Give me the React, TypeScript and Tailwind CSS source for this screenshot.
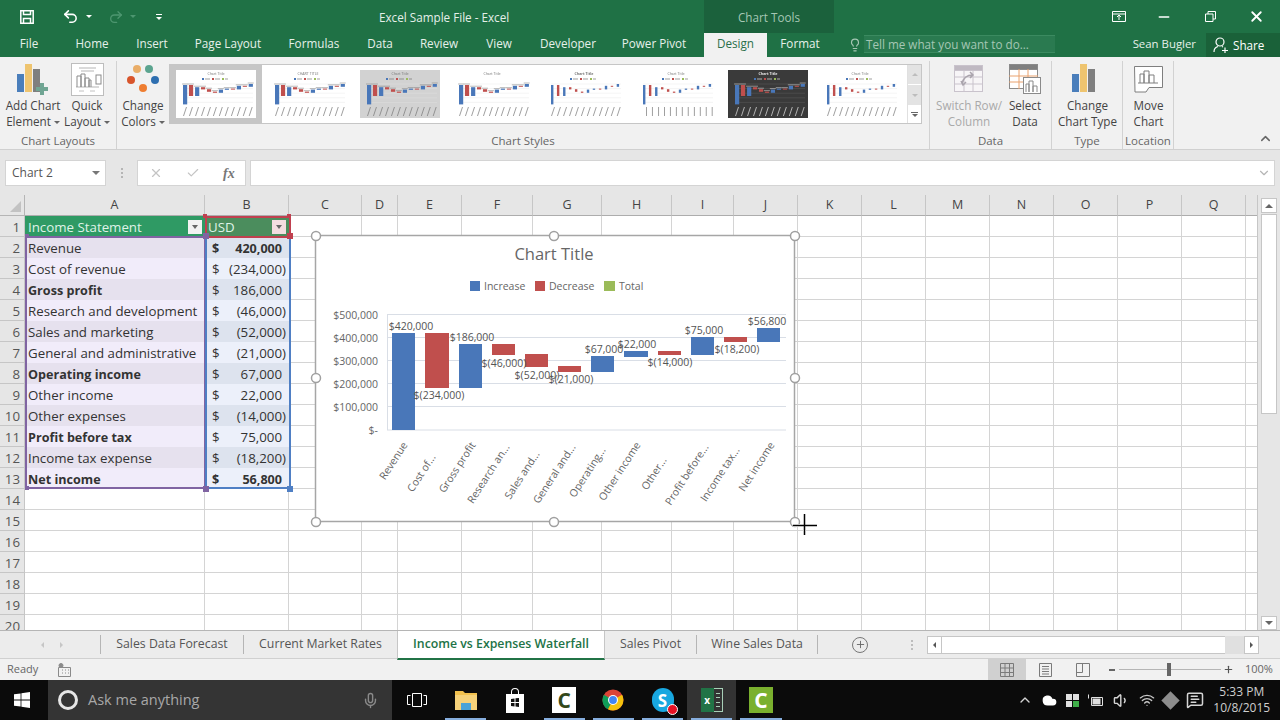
import React from "react";
import {
  Undo2,
  Redo2,
  Lightbulb,
  Minus,
  X,
  Check,
  ChevronUp,
  ChevronDown,
  Mic,
  Volume1,
  Wifi,
  MessageSquareText,
  Cloud,
  Plus,
} from "lucide-react";

const columns = ["A", "B", "C", "D", "E", "F", "G", "H", "I", "J", "K", "L", "M", "N", "O", "P", "Q", ""];

const tableRows = [
  { name: "Revenue", value: "420,000", bold: false, boldValue: true },
  { name: "Cost of revenue", value: "(234,000)" },
  { name: "Gross profit", value: "186,000", bold: true },
  { name: "Research and development", value: "(46,000)" },
  { name: "Sales and marketing", value: "(52,000)" },
  { name: "General and administrative", value: "(21,000)" },
  { name: "Operating income", value: "67,000", bold: true },
  { name: "Other income", value: "22,000" },
  { name: "Other expenses", value: "(14,000)" },
  { name: "Profit before tax", value: "75,000", bold: true },
  { name: "Income tax expense", value: "(18,200)" },
  { name: "Net income", value: "56,800", bold: true, boldValue: true },
];

const BLUE = "#4977b9";
const RED = "#c04f4d";

const bars = [
  { x: 392, w: 23, top: 333, bot: 430, c: BLUE },
  { x: 425, w: 24, top: 333, bot: 388, c: RED },
  { x: 459, w: 23, top: 344, bot: 388, c: BLUE },
  { x: 492, w: 23, top: 344, bot: 355, c: RED },
  { x: 525, w: 23, top: 354, bot: 367, c: RED },
  { x: 558, w: 23, top: 366, bot: 372, c: RED },
  { x: 591, w: 23, top: 356, bot: 372, c: BLUE },
  { x: 624, w: 24, top: 351, bot: 357, c: BLUE },
  { x: 658, w: 23, top: 351, bot: 355, c: RED },
  { x: 691, w: 23, top: 337, bot: 355, c: BLUE },
  { x: 724, w: 23, top: 337, bot: 342, c: RED },
  { x: 757, w: 23, top: 328, bot: 342, c: BLUE },
];

const dataLabels = [
  ["$420,000", 411, 326],
  ["$(234,000)", 439, 395],
  ["$186,000", 472, 337],
  ["$(46,000)", 504, 363],
  ["$(52,000)", 537, 375],
  ["$(21,000)", 571, 379],
  ["$67,000", 604, 349],
  ["$22,000", 637, 344],
  ["$(14,000)", 670, 362],
  ["$75,000", 704, 330],
  ["$(18,200)", 737, 349],
  ["$56,800", 767, 321],
] as const;

const categories = [
  ["Revenue", 408, 445],
  ["Cost of...", 436, 457],
  ["Gross profit", 476, 445],
  ["Research an...", 510, 447],
  ["Sales and...", 540, 454],
  ["General and...", 576, 447],
  ["Operating...", 606, 450],
  ["Other income", 641, 445],
  ["Other...", 667, 460],
  ["Profit before...", 709, 447],
  ["Income tax...", 740, 450],
  ["Net income", 775, 445],
] as const;

function MiniChart({ variant }: { variant: number }) {
  const dark = variant === 6;
  const gray = variant === 2;
  const thin = variant === 4 || variant === 5 || variant === 7;
  const ink = dark ? "#e4e4e4" : "#777777";
  return (
    <svg viewBox="0 0 80 48" className="w-[80px] h-[48px] blur-[0.4px]">
      <rect width="80" height="48" fill={dark ? "#3a3a3a" : gray ? "#d2d2d2" : "#ffffff"} />
      <text x="40" y="4.5" fontSize="3.6" textAnchor="middle" fill={ink} fontWeight={variant === 4 || dark ? 700 : 400}>
        {variant === 1 ? "CHART TITLE" : "Chart Title"}
      </text>
      {variant !== 3 && (
        <g>
          <rect x="26" y="8" width="2" height="2" fill={BLUE} />
          <rect x="36" y="8" width="2" height="2" fill={RED} />
          <rect x="46" y="8" width="2" height="2" fill="#9bbb59" />
          <line x1="29" y1="9" x2="34" y2="9" stroke={ink} strokeWidth="0.7" />
          <line x1="39" y1="9" x2="44" y2="9" stroke={ink} strokeWidth="0.7" />
          <line x1="49" y1="9" x2="52" y2="9" stroke={ink} strokeWidth="0.7" />
        </g>
      )}
      {[0, 1, 2, 3, 4].map((i) => (
        <line key={i} x1="7" x2="77" y1={14 + i * 4.6} y2={14 + i * 4.6} stroke={dark ? "#666666" : "#e2e2e2"} strokeWidth="0.4" />
      ))}
      {bars.map((b, i) => {
        const x = 7 + (b.x - 392) * 0.18;
        const top = 14 + (b.top - 328) * 0.2;
        const bot = 14 + (b.bot - 328) * 0.2;
        return (
          <g key={i}>
            <rect x={x} y={top} width={thin ? 2.4 : 4.2} height={Math.max(bot - top, 1)} fill={b.c} />
            {!thin && <rect x={x - 1} y={top - 1.5} width="6" height="1" fill={ink} opacity="0.5" />}
            <line
              x1={x + 3.5}
              y1="37"
              x2={variant === 5 ? x + 3.5 : x + 0.5}
              y2="46"
              stroke={ink}
              strokeWidth="1"
              opacity="0.7"
            />
          </g>
        );
      })}
    </svg>
  );
}

function RibbonButton({
  icon,
  lines,
  width,
  muted,
  caret,
}: {
  icon: React.ReactNode;
  lines: string[];
  width: string;
  muted?: boolean;
  caret?: boolean;
}) {
  return (
    <div className={`flex flex-col items-center shrink-0 ${width} ${muted ? "text-[#a9a9a9]" : "text-[#444444]"}`}>
      <div className="h-[36px] flex items-center justify-center">{icon}</div>
      {lines.map((l, i) => (
        <div key={l} className="h-[16px] leading-[16px] whitespace-nowrap text-[11.7px]">
          {l}
          {caret && i === 1 && <Caret />}
        </div>
      ))}
    </div>
  );
}

function RibbonGroup({ label, width, children }: { label: string; width: string; children: React.ReactNode }) {
  return (
    <div className={`flex flex-col shrink-0 h-[88px] border-r border-[#d2d2d2] ${width}`}>
      <div className="flex flex-1">{children}</div>
      <div className="h-[16px] leading-[16px] text-center text-[11.5px] text-[#666666]">{label}</div>
    </div>
  );
}

function Caret({ className = "" }: { className?: string }) {
  return <span className={`inline-block ml-[3px] align-middle border-x-[3px] border-t-[3px] border-x-transparent border-t-[#666666] ${className}`} />;
}

function ChartBarsIcon({ plus }: { plus?: boolean }) {
  return (
    <svg width="34" height="34" viewBox="0 0 34 34">
      <rect x="1" y="12" width="7" height="18" fill="#4a7ebb" />
      <rect x="9" y="2" width="7" height="28" fill="#eec46f" />
      <rect x="17" y="7" width="7" height="23" fill="#7f7f7f" />
      {plus && <path d="M24 21h4v4h4v4h-4v4h-4v-4h-4v-4h4z" fill="#70a593" />}
    </svg>
  );
}

function QuickLayoutIcon() {
  return (
    <svg width="33" height="33" viewBox="0 0 33 33" fill="none" stroke="#8b8b8b">
      <rect x="0.5" y="0.5" width="32" height="32" fill="#ffffff" stroke="#bdbdbd" />
      <path d="M8 5h17M10 8h13M5 24h23" stroke="#b5b5b5" strokeWidth="1.2" />
      <path d="M6 24V13h4v11M10 24V11h4v13M14 24V15h4v9M18 24V17h2v7" />
      <rect x="25" y="12" width="5" height="9" />
      <path d="M8 28h5M19 28h5" stroke="#c2c2c2" />
    </svg>
  );
}

function ColorsIcon() {
  return (
    <svg width="34" height="32" viewBox="0 0 34 32">
      <circle cx="11" cy="6" r="4" fill="#e9ad68" />
      <circle cx="23" cy="6" r="4" fill="#5ba48f" />
      <circle cx="5" cy="17" r="4" fill="#d8552c" />
      <circle cx="29" cy="17" r="4" fill="#2e6fb0" />
      <circle cx="17" cy="25" r="4" fill="#ee7d31" />
    </svg>
  );
}

function SwitchRowIcon() {
  return (
    <svg width="30" height="28" viewBox="0 0 30 28" fill="none" stroke="#c9c3cc">
      <rect x="0.5" y="0.5" width="28" height="26" fill="#f7f5f7" />
      <rect x="0.5" y="0.5" width="28" height="5" fill="#bfb9c2" />
      <path d="M10 5v22M19 5v22M0 12h29M0 19h29" />
      <path d="M8 19c1-6 5-9 11-9M16 7l3 3-3 3M7 16l2 4 3-3" stroke="#aaa4ad" strokeWidth="1.5" />
    </svg>
  );
}

function SelectDataIcon() {
  return (
    <svg width="32" height="30" viewBox="0 0 32 30" fill="none" stroke="#8a8a8a">
      <rect x="0.5" y="0.5" width="28" height="24" fill="#ffffff" />
      <rect x="0.5" y="0.5" width="28" height="5" fill="#7f7f7f" />
      <path d="M10 5v20M19 5v20M0 12h29M0 18h29" stroke="#e9a26f" />
      <rect x="14.5" y="13.5" width="17" height="16" fill="#ffffff" />
      <path d="M17 28V20h3v8M20 28V17h4v11M24 28v-6h4v6" />
    </svg>
  );
}

function MoveChartIcon() {
  return (
    <svg width="29" height="27" viewBox="0 0 29 27" fill="none" stroke="#7f7f7f">
      <path d="M0.5 0.5h28v21H15l-3 4.5H1z" fill="#ffffff" />
      <path d="M6 17V8h4v9M10 17V5h5v12M15 17V9h5v8M4 17h20" />
    </svg>
  );
}

function WindowsLogo() {
  return (
    <svg width="16" height="16" viewBox="0 0 16 16" fill="#ffffff">
      <path d="M0 2.3 6.6 1.4V7.5H0zM7.4 1.3 16 0v7.5H7.4zM0 8.4h6.6v6.2L0 13.7zM7.4 8.4H16V16l-8.6-1.2z" />
    </svg>
  );
}

function ChromeLogo() {
  return (
    <svg width="22" height="22" viewBox="0 0 22 22">
      <circle cx="11" cy="11" r="10.5" fill="#db4437" />
      <path d="M11 11 1.9 5.8A10.5 10.5 0 0 0 6 20.3z" fill="#0f9d58" />
      <path d="M11 11l-5 9.3A10.5 10.5 0 0 0 21.4 11 10 10 0 0 0 20 5.8z" fill="#f4c20d" />
      <circle cx="11" cy="11" r="5" fill="#ffffff" />
      <circle cx="11" cy="11" r="3.9" fill="#4285f4" />
    </svg>
  );
}

function TaskApp({ children, lit, active }: { children: React.ReactNode; lit?: boolean; active?: boolean }) {
  return (
    <div className={`relative w-[49.2px] h-full flex items-center justify-center shrink-0 ${active ? "bg-[#333333]" : ""}`}>
      {children}
      {lit && <div className="absolute bottom-0 left-[4px] right-[4px] h-[2px] bg-[#86aede]" />}
    </div>
  );
}

function CamtasiaIcon({ dark }: { dark?: boolean }) {
  return (
    <div className={`w-[24px] h-[26px] flex items-center justify-center font-bold text-[21px] leading-none ${dark ? "bg-[#7ab02e] text-white" : "bg-white text-[#33481a]"}`}>
      C
    </div>
  );
}

export default function App() {
  return (
    <div className="w-[1280px] h-[720px] overflow-hidden flex flex-col bg-[#e6e6e6] font-['Open_Sans',sans-serif] text-[11.7px] text-[#444444]">
      {/* title bar */}
      <div className="h-[33px] flex bg-[#1f7145] text-white shrink-0">
        <div className="w-[379px] flex items-center">
          <svg className="ml-[20px]" width="14" height="14" viewBox="0 0 14 14" fill="none" stroke="#ffffff" strokeWidth="1.5">
            <path d="M.8.8h12.4v12.4H.8zM3.500 1v3.500h7V1M3.500 13V8.500h7V13" />
          </svg>
          <Undo2 className="ml-[28px]" size={17} strokeWidth={2.2} />
          <Caret className="!border-t-white ml-[7px]" />
          <Redo2 className="ml-[16px] text-[#4d9670]" size={16} />
          <Caret className="!border-t-[#4d9670] ml-[6px]" />
          <div className="ml-[20px] flex flex-col items-center gap-[2px]">
            <span className="w-[6px] h-px bg-white" />
            <Caret className="!ml-0 !border-t-white" />
          </div>
        </div>
        <div className="w-[325px] pt-[9px] leading-[16px] text-[#e4efe9]">Excel Sample File - Excel</div>
        <div className="w-[130px] bg-[#1b613c] text-center pt-[9px] leading-[16px] text-[#a5c7b4]">Chart Tools</div>
        <div className="flex-1 flex items-center pl-[278px]">
          <svg width="14" height="11" viewBox="0 0 14 11" fill="none" stroke="#ffffff">
            <path d="M.5.5h13v10H.5zM.5 3h13M7 9V4.500M5 6l2-2 2 2" />
          </svg>
          <Minus className="ml-[30px]" size={16} strokeWidth={2.4} />
          <svg className="ml-[33px]" width="11" height="11" viewBox="0 0 11 11" fill="none" stroke="#ffffff">
            <path d="M.5 3h7.500v7.500H.5zM3 3V.5h7.500V8H8" />
          </svg>
          <X className="ml-[32px]" size={17} strokeWidth={2.6} />
        </div>
      </div>

      {/* tabs */}
      <div className="h-[24px] flex bg-[#1f7145] text-[#e6f0ea] shrink-0 leading-[21px]">
        {[
          ["File", "w-[58px]"],
          ["Home", "w-[68px]"],
          ["Insert", "w-[52px]"],
          ["Page Layout", "w-[100px]"],
          ["Formulas", "w-[72px]"],
          ["Data", "w-[60px]"],
          ["Review", "w-[58px]"],
          ["View", "w-[62px]"],
          ["Developer", "w-[76px]"],
          ["Power Pivot", "w-[96px]"],
        ].map(([t, w]) => (
          <div key={t} className={`text-center ${w}`}>
            {t}
          </div>
        ))}
        <div className="w-[2px]" />
        <div className="w-[63px] text-center bg-[#f1f1f1] text-[#2a6f4a]">Design</div>
        <div className="w-[66px] text-center">Format</div>
        <div className="w-[31px] flex items-center justify-end pr-[2px] text-[#a5c7b4]">
          <Lightbulb size={14} />
        </div>
        <div className="w-[191px] h-[18px] mt-[2px] bg-[#2a7a50] border-y border-[#3b8a60] text-[#a5c7b4] pl-[2px] leading-[16px]">Tell me what you want to do...</div>
        <div className="w-[141px] text-right text-[11.4px]">Sean Bugler</div>
        <div className="w-[10px]" />
        <div className="flex-1 bg-[#1a6139] flex items-center pl-[7px] gap-[4px] text-white">
          <svg width="16" height="16" viewBox="0 0 16 16" fill="none" stroke="#ffffff" strokeWidth="1.2">
            <circle cx="7" cy="5" r="4" />
            <path d="M1 15c0-3 2-5 4-5.500M9 9.500l1 .5M9 13.500h6M12 10.500v6" />
          </svg>
          Share
        </div>
      </div>

      {/* ribbon */}
      <div className="h-[93px] flex bg-[#f1f1f1] border-b border-[#d0d0d0] pt-[4px] shrink-0 relative">
        <RibbonGroup label="Chart Layouts" width="w-[117px]">
          <RibbonButton width="w-[60px] ml-[3px]" caret icon={<ChartBarsIcon plus />} lines={["Add Chart", "Element"]} />
          <RibbonButton width="w-[48px]" caret icon={<QuickLayoutIcon />} lines={["Quick", "Layout"]} />
        </RibbonGroup>
        <RibbonGroup label="Chart Styles" width="w-[813px]">
          <RibbonButton width="w-[52px]" caret icon={<ColorsIcon />} lines={["Change", "Colors"]} />
          <div className="flex h-[60px] mt-[3px] w-[753px] border border-[#c6c6c6] bg-white">
            <div className="flex flex-1">
              {[0, 1, 2, 3, 4, 5, 6, 7].map((v) => (
                <div key={v} className={`w-[92px] shrink-0 flex items-center justify-center ${v === 0 ? "bg-[#c6c6c6]" : ""}`}>
                  <MiniChart variant={v} />
                </div>
              ))}
            </div>
            <div className="w-[14px] flex flex-col border-l border-[#e0e0e0]">
              <div className="h-[20px] bg-[#e3e3e3] border-b border-white flex items-center justify-center">
                <span className="border-x-[3px] border-b-[3px] border-x-transparent border-b-[#bdbdbd]" />
              </div>
              <div className="h-[20px] bg-[#e3e3e3] flex items-center justify-center">
                <span className="border-x-[3px] border-t-[3px] border-x-transparent border-t-[#bdbdbd]" />
              </div>
              <div className="flex-1 flex flex-col items-center justify-center gap-[1px]">
                <span className="w-[7px] h-px bg-[#666666]" />
                <span className="border-x-[3px] border-t-[3px] border-x-transparent border-t-[#666666]" />
              </div>
            </div>
          </div>
        </RibbonGroup>
        <RibbonGroup label="Data" width="w-[122px]">
          <RibbonButton width="w-[78px]" muted icon={<SwitchRowIcon />} lines={["Switch Row/", "Column"]} />
          <RibbonButton width="w-[34px]" icon={<SelectDataIcon />} lines={["Select", "Data"]} />
        </RibbonGroup>
        <RibbonGroup label="Type" width="w-[71px]">
          <RibbonButton width="w-[71px]" icon={<ChartBarsIcon />} lines={["Change", "Chart Type"]} />
        </RibbonGroup>
        <RibbonGroup label="Location" width="w-[51px]">
          <RibbonButton width="w-[51px]" icon={<MoveChartIcon />} lines={["Move", "Chart"]} />
        </RibbonGroup>
        <div className="flex-1 flex items-end justify-end pr-[7px] pb-[1px]">
          <ChevronUp size={15} strokeWidth={2.4} className="text-[#666666] mb-[2px]" />
        </div>
      </div>

      {/* formula bar */}
      <div className="h-[45px] flex items-start pt-[10px] pl-[5px] bg-[#e6e6e6] shrink-0">
        <div className="w-[101px] h-[26px] bg-white border border-[#d4d4d4] flex items-center justify-between pl-[6px] pr-[5px] text-[#555555] text-[12px]">
          Chart 2
          <span className="border-x-[4px] border-t-[4px] border-x-transparent border-t-[#777777]" />
        </div>
        <div className="w-[31px] h-[26px] flex flex-col items-center justify-center gap-[2px]">
          <span className="w-[2px] h-[2px] bg-[#b5b5b5]" />
          <span className="w-[2px] h-[2px] bg-[#b5b5b5]" />
          <span className="w-[2px] h-[2px] bg-[#b5b5b5]" />
        </div>
        <div className="w-[109px] h-[26px] bg-white border border-[#d4d4d4] flex items-center pl-[11px] text-[#c4c4c4]">
          <X size={14} />
          <Check size={14} className="ml-[23px]" />
          <span className="ml-[23px] font-['Liberation_Serif',serif] italic font-bold text-[14px] text-[#777777]">fx</span>
        </div>
        <div className="w-[4px]" />
        <div className="w-[1025px] h-[26px] bg-white border border-[#d4d4d4] flex items-center justify-end pr-[3px] text-[#b5b5b5]">
          <ChevronDown size={14} />
        </div>
      </div>

      {/* sheet */}
      <div className="h-[435px] flex shrink-0">
        <div className="relative w-[1258px] h-full overflow-hidden bg-white border-r border-[#c6c6c6]">
          <div className="grid grid-cols-[25px_180px_84px_73px_36px_64px_71px_69px_70px_62px_64px_64px_64px_64px_64px_64px_64px_64px_12px] auto-rows-[21px]">
            <div className="bg-[#e6e6e6] h-[21px] border-b border-r border-[#b5b5b5] flex items-end justify-end p-[3px]">
              <span className="border-l-[11px] border-b-[11px] border-l-transparent border-b-[#c2c2c2]" />
            </div>
            {columns.map((c, i) => (
              <div key={i} className="h-[21px] bg-[#e6e6e6] border-b border-r border-b-[#adadad] border-r-[#c6c6c6] text-center text-[12.5px] leading-[20px] text-[#444444]">
                {c}
              </div>
            ))}
            {Array.from({ length: 20 }).map((_, r) => {
              const row = tableRows[r - 1];
              const even = r % 2 === 1;
              return (
                <React.Fragment key={r}>
                  <div className="bg-[#e6e6e6] border-b border-r border-[#c6c6c6] text-right pr-[4px] text-[13.3px] leading-[22px] text-[#555555]">{r + 1}</div>
                  {columns.map((_c, c) => {
                    if (c === 0 && r === 0)
                      return (
                        <div key={c} className="bg-[#2f9a64] text-[#dff3e7] text-[13.3px] leading-[22px] pl-[3px] flex justify-between">
                          Income Statement
                          <span className="w-[14px] h-[14px] mt-[4px] mr-[3px] bg-[#f2f2f2] flex items-center justify-center">
                            <span className="border-x-[3.5px] border-t-[4px] border-x-transparent border-t-[#666666]" />
                          </span>
                        </div>
                      );
                    if (c === 1 && r === 0)
                      return (
                        <div key={c} className="bg-[#4b8d5d] text-[#dff3e7] text-[13.3px] leading-[22px] pl-[3px] flex justify-between">
                          USD
                          <span className="w-[14px] h-[14px] mt-[4px] mr-[3px] bg-[#f3dde0] flex items-center justify-center">
                            <span className="border-x-[3.5px] border-t-[4px] border-x-transparent border-t-[#666666]" />
                          </span>
                        </div>
                      );
                    if (c === 0 && row)
                      return (
                        <div key={c} className={`leading-[23px] pl-[3px] whitespace-nowrap text-[#333333] ${even ? "bg-[#e6e1ee]" : "bg-[#f1ecfa]"} ${row.bold ? "font-bold text-[12.6px]" : "text-[13.3px]"}`}>
                          {row.name}
                        </div>
                      );
                    if (c === 1 && row)
                      return (
                        <div key={c} className={`leading-[23px] pl-[7px] pr-[3px] flex justify-between whitespace-nowrap text-[#333333] ${even ? "bg-[#dde3ee]" : "bg-[#ecf0fa]"} ${row.boldValue ? "font-bold text-[12.6px]" : "text-[13.3px]"}`}>
                          <span>$</span>
                          <span className={row.value.startsWith("(") ? "" : "pr-[4px]"}>{row.value}</span>
                        </div>
                      );
                    return <div key={c} className="border-b border-r border-[#d4d4d4]" />;
                  })}
                </React.Fragment>
              );
            })}
          </div>

          {/* selection outlines over the table */}
          <div className="absolute left-[25px] top-[41px] w-[181px] h-[253px] border-2 border-[#8064a2]" />
          <div className="absolute left-[205px] top-[41px] w-[86px] h-[253px] border-2 border-[#4f7fc4]" />
          <div className="absolute left-[205px] top-[21px] w-[86px] h-[22px] border-2 border-[#c0404f]" />
          <div className="absolute left-[203px] top-[38px] w-[6px] h-[6px] bg-[#8064a2]" />
          <div className="absolute left-[25px] top-[39px] w-[4px] h-[4px] bg-[#8064a2]" />
          <div className="absolute left-[25px] top-[291px] w-[4px] h-[4px] bg-[#8064a2]" />
          <div className="absolute left-[203px] top-[291px] w-[6px] h-[6px] bg-[#8064a2]" />
          <div className="absolute left-[287px] top-[38px] w-[6px] h-[6px] bg-[#c0404f]" />
          <div className="absolute left-[287px] top-[291px] w-[6px] h-[6px] bg-[#4f7fc4]" />
          <div className="absolute left-[203px] top-[19px] w-[4px] h-[4px] bg-[#c0404f]" />
          <div className="absolute left-[287px] top-[19px] w-[4px] h-[4px] bg-[#c0404f]" />

          {/* chart object */}
          <svg className="absolute left-[305px] top-[30px]" width="520" height="310" viewBox="305 225 520 310">
            <rect x="315.500" y="235.500" width="479" height="286" fill="#ffffff" stroke="#a6a6a6" strokeWidth="1.5" />
            <text x="554" y="253" fontSize="16.5" textAnchor="middle" dominantBaseline="central" fill="#666666">
              Chart Title
            </text>
            <rect x="470" y="281" width="10" height="10" fill={BLUE} />
            <text x="484" y="286" fontSize="10.500" dominantBaseline="central" fill="#666666">Increase</text>
            <rect x="535" y="281" width="10" height="10" fill={RED} />
            <text x="549" y="286" fontSize="10.500" dominantBaseline="central" fill="#666666">Decrease</text>
            <rect x="604" y="281" width="11" height="10" fill="#9bbb59" />
            <text x="619" y="286" fontSize="10.500" dominantBaseline="central" fill="#666666">Total</text>
            {[
              ["$500,000", 314.5],
              ["$400,000", 337.5],
              ["$300,000", 360.5],
              ["$200,000", 383.5],
              ["$100,000", 406.5],
              ["$-", 430],
            ].map(([t, y]) => (
              <g key={t}>
                <line x1="387" x2="786" y1={y} y2={y} stroke="#d9dee6" />
                <text x="378" y={y} fontSize="10.500" textAnchor="end" dominantBaseline="central" fill="#666666">
                  {t}
                </text>
              </g>
            ))}
            <line x1="387.500" x2="387.500" y1="314" y2="430" stroke="#d9dee6" />
            {bars.map((b) => (
              <rect key={b.x} x={b.x} y={b.top} width={b.w} height={b.bot - b.top} fill={b.c} />
            ))}
            {dataLabels.map(([t, x, y]) => (
              <text key={t} x={x} y={y} fontSize="10.500" textAnchor="middle" dominantBaseline="central" fill="#555555">
                {t}
              </text>
            ))}
            {categories.map(([t, x, y]) => (
              <text key={t} x={x} y={y} fontSize="10.500" textAnchor="end" fill="#666666" transform={`rotate(-57 ${x} ${y})`}>
                {t}
              </text>
            ))}
            {[
              [316, 236],
              [554, 236],
              [795, 236],
              [316, 378],
              [795, 378],
              [316, 522],
              [554, 522],
              [795, 522],
            ].map(([x, y]) => (
              <circle key={`${x}-${y}`} cx={x} cy={y} r="4.500" fill="#ffffff" stroke="#a0a0a0" strokeWidth="1.5" />
            ))}
            <path d="M804.500 514v23M793 525.500h24" stroke="#ffffff" strokeWidth="3" />
            <path d="M804.500 514v23M793 525.500h24" stroke="#000000" strokeWidth="1.5" />
          </svg>
        </div>

        {/* vertical scrollbar */}
        <div className="flex-1 flex flex-col pl-[3px] pr-[3px] pt-[3px] pb-[0px] bg-[#e6e6e6]">
          <div className="h-[15px] bg-white border border-[#c6c6c6] flex items-center justify-center">
            <span className="border-x-[4px] border-b-[4px] border-x-transparent border-b-[#666666]" />
          </div>
          <div className="h-[200px] mt-[1px] bg-white border border-[#c6c6c6]" />
          <div className="flex-1" />
          <div className="h-[14px] bg-white border border-[#c6c6c6] flex items-center justify-center">
            <span className="border-x-[4px] border-t-[4px] border-x-transparent border-t-[#666666]" />
          </div>
        </div>
      </div>

      {/* sheet tabs */}
      <div className="h-[28px] flex bg-[#ececec] border-t border-[#b5b5b5] shrink-0 text-[12.3px] text-[#555555]">
        <div className="w-[100px] flex items-center justify-center gap-[16px] text-[#c6c6c6] text-[9px] pl-[6px] pr-[2px]">
          <span className="border-y-[3px] border-r-[3px] border-y-transparent border-r-[#c6c6c6]" />
          <span className="border-y-[3px] border-l-[3px] border-y-transparent border-l-[#c6c6c6]" />
        </div>
        <div className="w-[143px] border-l border-[#b5b5b5] my-[4px] text-center leading-[18px]">Sales Data Forecast</div>
        <div className="w-[154px] border-l border-[#b5b5b5] my-[4px] text-center leading-[18px]">Current Market Rates</div>
        <div className="w-[208px] h-[29px] bg-white border-b-2 border-x border-x-[#c6c6c6] border-b-[#217346] text-center font-semibold text-[#217346] leading-[26px] z-10">Income vs Expenses Waterfall</div>
        <div className="w-[91px] my-[4px] text-center leading-[18px]">Sales Pivot</div>
        <div className="w-[122px] border-x border-[#b5b5b5] my-[4px] text-center leading-[18px]">Wine Sales Data</div>
        <div className="w-[84px] flex items-center justify-center">
          <span className="w-[16px] h-[16px] rounded-full border border-[#777777] flex items-center justify-center">
            <Plus size={11} strokeWidth={2} className="text-[#666666]" />
          </span>
        </div>
        <div className="w-[25px] pr-[6px] flex flex-col items-center justify-center gap-[2px]">
          <span className="w-[2px] h-[2px] bg-[#bdbdbd]" />
          <span className="w-[2px] h-[2px] bg-[#bdbdbd]" />
          <span className="w-[2px] h-[2px] bg-[#bdbdbd]" />
        </div>
        <div className="w-[332px] h-[18px] mt-[5px] flex bg-[#e0e0e0]">
          <div className="w-[15px] bg-white border border-[#c6c6c6] flex items-center justify-center">
            <span className="border-y-[3px] border-r-[3px] border-y-transparent border-r-[#555555]" />
          </div>
          <div className="w-[283px] bg-white border-y border-[#c6c6c6]" />
          <div className="flex-1" />
          <div className="w-[15px] bg-white border border-[#c6c6c6] flex items-center justify-center">
            <span className="border-y-[3px] border-l-[3px] border-y-transparent border-l-[#555555]" />
          </div>
        </div>
      </div>

      {/* status bar */}
      <div className="h-[22px] flex items-center bg-[#f1f1f1] border-t border-[#d0d0d0] shrink-0 text-[11px] text-[#666666]">
        <div className="w-[58px] pl-[7px]">Ready</div>
        <svg width="13" height="14" viewBox="0 0 13 14" fill="none" stroke="#8a8a8a">
          <circle cx="3" cy="2.500" r="2" fill="#8a8a8a" />
          <path d="M.5 4.500h12v9H.5zM4 7h1M7 7h1M10 7h1M4 10h1M7 10h1M10 10h1" />
        </svg>
        <div className="w-[917px]" />
        <div className="w-[38px] h-full bg-[#d0d0d0] flex items-center justify-center">
          <svg width="14" height="14" viewBox="0 0 14 14" fill="none" stroke="#7a7a7a">
            <path d="M.5.5h13v13H.5zM5 .5v13M9.500.5v13M.5 5h13M.5 9.500h13" />
          </svg>
        </div>
        <div className="w-[38px] flex justify-center">
          <svg width="13" height="14" viewBox="0 0 13 14" fill="none" stroke="#7a7a7a">
            <path d="M.5.5h12v13H.5zM3 3.500h7M3 6h7M3 8.500h7M3 11h7" />
          </svg>
        </div>
        <div className="w-[38px] flex justify-center">
          <svg width="14" height="14" viewBox="0 0 14 14" fill="none" stroke="#7a7a7a">
            <path d="M.5.5h13v13H.5zM.5 9.500h6v-9" />
          </svg>
        </div>
        <span className="ml-[7px] w-[6px] h-[2px] bg-[#666666]" />
        <div className="relative w-[102px] h-px ml-[4px] bg-[#b5b5b5]">
          <span className="absolute left-[48px] top-[-6px] w-[4px] h-[13px] bg-[#666666]" />
        </div>
        <Plus size={11} strokeWidth={2.6} className="ml-[2px] text-[#555555]" />
        <span className="ml-[11px]">100%</span>
      </div>

      {/* taskbar */}
      <div className="h-[40px] flex bg-[#0b0b0b] shrink-0 text-white">
        <div className="w-[48px] flex items-center justify-center pr-[4px]">
          <WindowsLogo />
        </div>
        <div className="w-[344px] bg-[#343434] flex items-center pl-[10px]">
          <span className="w-[20px] h-[20px] rounded-full border-[3px] border-[#e6e6e6] shrink-0" />
          <span className="ml-[10px] text-[14.5px] text-[#a8a8a8] w-[274px] shrink-0">Ask me anything</span>
          <Mic size={17} className="text-[#8a8a8a] shrink-0" />
        </div>
        <TaskApp>
          <svg width="20" height="16" viewBox="0 0 20 16" fill="none" stroke="#ffffff">
            <path d="M5.500 1.500h9v13h-9zM3.500 3.500h-3v9h3M16.500 3.500h3v9h-3" />
          </svg>
        </TaskApp>
        <TaskApp lit>
          <svg width="22" height="22" viewBox="0 0 22 22">
            <path d="M0 2h8l2 2h12v17H0z" fill="#f2c14e" />
            <rect x="0" y="6" width="22" height="15" fill="#f6d27a" />
            <rect x="6" y="14" width="10" height="7" fill="#4aa3d8" />
          </svg>
        </TaskApp>
        <TaskApp>
          <svg width="20" height="25" viewBox="0 0 20 25" fill="#ffffff">
            <path d="M6 6V4a4 4 0 0 1 8 0v2h-1V4a3 3 0 0 0-6 0v2z" />
            <path d="M1 6h18v19H1z" />
            <path d="M6 11l3.500-.5v3.500H6zM10.500 10.300 14 10v4h-3.500zM6 15h3.500v3.500L6 18zM10.500 15H14v4l-3.500-.5z" fill="#111111" />
          </svg>
        </TaskApp>
        <TaskApp lit>
          <CamtasiaIcon />
        </TaskApp>
        <TaskApp lit>
          <ChromeLogo />
        </TaskApp>
        <TaskApp lit>
          <div className="relative w-[22px] h-[24px] rounded-full bg-[#18a7e0] flex items-center justify-center font-bold text-[17px] leading-none text-white">
            S
            <span className="absolute -right-[4px] -bottom-[3px] w-[11px] h-[11px] rounded-full bg-[#e81123] border border-white" />
          </div>
        </TaskApp>
        <TaskApp lit active>
          <div className="w-[22px] h-[24px] flex items-stretch">
            <div className="w-[13px] bg-[#217346] flex items-center justify-center text-[10px] font-bold">x</div>
            <div className="flex-1 border border-[#a8d0b8] border-l-0 flex flex-col justify-evenly px-[2px]">
              <span className="h-px bg-[#a8d0b8]" />
              <span className="h-px bg-[#a8d0b8]" />
              <span className="h-px bg-[#a8d0b8]" />
              <span className="h-px bg-[#a8d0b8]" />
            </div>
          </div>
        </TaskApp>
        <TaskApp lit>
          <CamtasiaIcon dark />
        </TaskApp>
        <div className="w-[418px] flex items-center justify-end gap-[9px]">
          <ChevronUp size={16} className="text-[#d5d5d5]" />
          <Cloud size={15} fill="#ffffff" className="text-white" />
          <div className="grid grid-cols-2 gap-px">
            <span className="w-[6px] h-[6px] bg-[#e0e0e0]" />
            <span className="w-[6px] h-[6px] bg-[#e0e0e0]" />
            <span className="w-[6px] h-[6px] bg-[#e0e0e0]" />
            <span className="w-[6px] h-[6px] bg-[#3fae49]" />
          </div>
          <svg width="16" height="12" viewBox="0 0 16 12" fill="none" stroke="#e0e0e0">
            <path d="M.5.5v4M3.500 3.500h11v8h-11z" />
            <rect x="5" y="5" width="7" height="5" fill="#e0e0e0" />
          </svg>
          <Volume1 size={17} className="text-[#d5d5d5]" />
          <Wifi size={16} className="text-[#c8c8c8]" />
          <span className="w-[13px] h-[13px] rotate-45 bg-[#8d8d8d]" />
          <MessageSquareText size={18} className="text-[#d5d5d5]" />
        </div>
        <div className="flex-1 text-center text-[#cfcfcf] leading-[16px] pt-[4px] text-[12px]">
          <div>5:33 PM</div>
          <div>10/8/2015</div>
        </div>
      </div>
    </div>
  );
}
